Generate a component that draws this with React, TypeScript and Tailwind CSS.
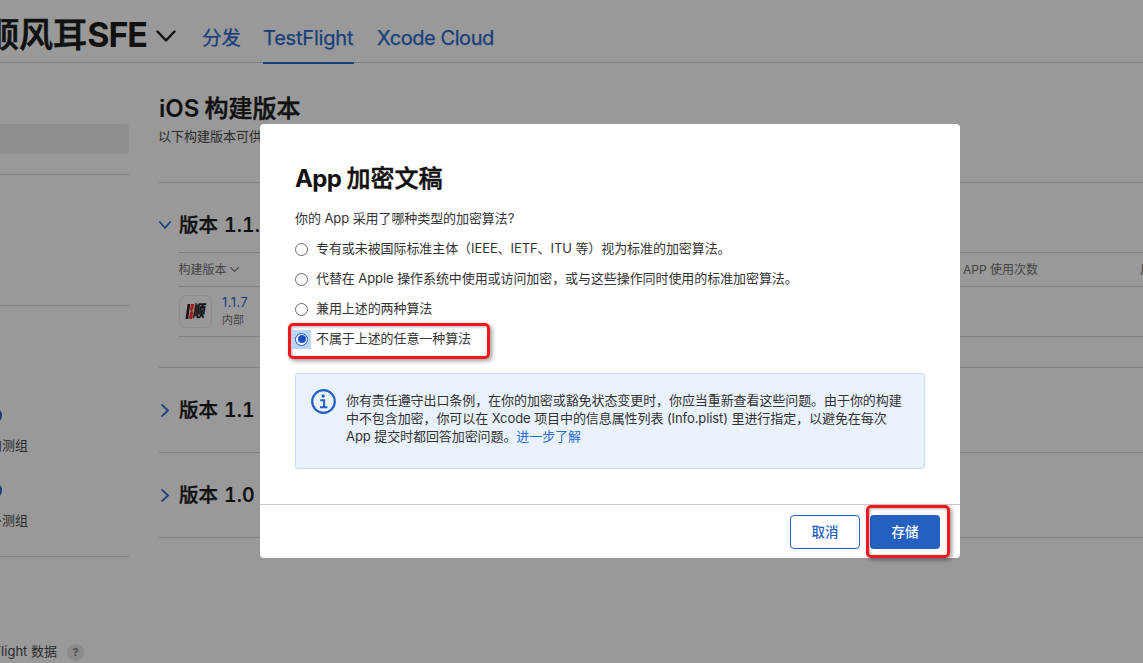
import React from "react";

const font = "font-['Inter','Noto_Sans_CJK_SC',sans-serif]";

function Chevron({ className, down = false, width = 2 }: { className: string; down?: boolean; width?: number }) {
  return (
    <svg
      className={`shrink-0 ${className}`}
      viewBox={down ? "0 0 20 12" : "0 0 12 20"}
      preserveAspectRatio="none"
      fill="none"
      stroke="currentColor"
      strokeWidth={width}
      strokeLinecap="round"
      strokeLinejoin="round"
    >
      <path vectorEffect="non-scaling-stroke" d={down ? "M1.5 1.5 10 10.5 18.5 1.5" : "M1.5 1.5 10.5 10 1.5 18.5"} />
    </svg>
  );
}

function Header() {
  return (
    <header className="flex h-[63px] shrink-0 border-b border-[#7f7f7f]">
      <div className="flex h-[69px] w-[147px] shrink-0 justify-end text-[34px] leading-[69px] whitespace-nowrap text-[#111]">
        <span className="font-medium [-webkit-text-stroke:0.7px_#111]">顺风耳</span>
        <span className="font-bold tracking-[-1px]">SFE</span>
      </div>
      <Chevron down width={2.4} className="mt-[30px] ml-[9px] h-[12px] w-[20px] text-[#111]" />
      <nav className="ml-[26px] flex h-[64px] text-[20px] leading-[76px] whitespace-nowrap text-[#163f7c] [-webkit-text-stroke:0.25px_#163f7c]">
        <a className="w-[61px] text-[19.5px] tracking-[-0.3px]">分发</a>
        <a className="h-[64px] w-[91px] border-b-2 border-[#163f7c] tracking-[-0.2px]">TestFlight</a>
        <a className="ml-[23px] tracking-[-0.42px]">Xcode Cloud</a>
      </nav>
    </header>
  );
}

function Group({ name }: { name: string }) {
  return (
    <div className="h-[75px]">
      <div className="-ml-[15.5px] h-[17px] w-[17px] rounded-full bg-[#163f7c]" />
      <div className="mt-[11px] -ml-[11px] h-[20px] text-[13px] leading-[20px] whitespace-nowrap">{name}</div>
    </div>
  );
}

function Sidebar() {
  return (
    <aside className="w-[129px] shrink-0 overflow-hidden pt-[61px] text-[#2b2b2b]">
      <div className="h-[30px] rounded-r-[4px] bg-[#8f8f8f]" />
      <div className="mt-[20px] h-[132px] border-y border-[#7f7f7f]" />
      <div className="h-[251px] border-b border-[#7f7f7f] pt-[101px]">
        <Group name="内测组" />
        <Group name="外测组" />
      </div>
      <div className="mt-[85px] flex h-[20px] items-center">
        <div className="flex w-[57px] justify-end text-[13px] whitespace-nowrap">TestFlight 数据</div>
        <div className="ml-[10px] flex h-[17px] w-[17px] items-center justify-center rounded-full bg-[#8b8b8b] text-[11px] font-bold text-[#4c4c4c]">
          ?
        </div>
      </div>
    </aside>
  );
}

function Version({ number, open = false, children }: { number: string; open?: boolean; children?: React.ReactNode }) {
  return (
    <section className="border-b border-[#7f7f7f]">
      <div className={open ? "flex h-[69px] items-center pt-[15px]" : "flex h-[84px] items-center"}>
        <div className="flex w-[20px] shrink-0">
          {open ? (
            <Chevron down width={1.7} className="h-[8px] w-[12px] text-[#163f7c]" />
          ) : (
            <Chevron width={1.7} className="ml-[2px] h-[13px] w-[8px] text-[#163f7c]" />
          )}
        </div>
        <h2 className="pt-[2px] text-[19.5px] whitespace-nowrap text-[#111]">
          <span className="font-medium [-webkit-text-stroke:0.4px_#111]">版本</span>
          <span className="ml-[6px] font-semibold tracking-[0.1px] tabular-nums">{number}</span>
        </h2>
      </div>
      {children}
    </section>
  );
}

function AppIcon() {
  return (
    <svg className="h-[33px] w-[33px] shrink-0" viewBox="0 0 33 33">
      <rect x="0.5" y="0.5" width="32" height="32" rx="7" fill="#999" stroke="#8d8d8d" />
      <path d="M8.6 9h2.7L9.2 24H6.5z" fill="#161616" />
      <path d="M12 9h3l-.7 5-1.2 1.6 1 1.4-1 7h-3l.8-6 1.3-1.8-1-1.2z" fill="#a3161c" />
      <text
        transform="translate(13.6 22.4) skewX(-9) scale(.8 1.12)"
        fontSize="15"
        fontWeight="900"
        fill="#111"
      >
        顺
      </text>
    </svg>
  );
}

function Builds() {
  return (
    <main className="ml-[30px] flex-1 overflow-hidden pt-[30px]">
      <h1 className="h-[32px] text-[24px] leading-[32px] whitespace-nowrap text-[#111]">
        <span className="font-semibold">iOS </span>
        <span className="-ml-px font-medium [-webkit-text-stroke:0.5px_#111]">构建版本</span>
      </h1>
      <p className="mt-px -ml-px h-[20px] text-[13px] leading-[20px] whitespace-nowrap text-[#2b2b2b]">以下构建版本可供测试。</p>
      <div className="mt-[36px] border-t border-[#7f7f7f]">
        <Version number="1.1.7" open>
          <div className="mb-[30px] ml-[20px] border-y border-[#7f7f7f]">
            <div className="flex h-[34px] items-center border-b border-[#7f7f7f] text-[12px] whitespace-nowrap text-[#444]">
              <span className="-ml-[0.5px] shrink-0">构建版本</span>
              <Chevron down width={1.2} className="ml-[3px] h-[5px] w-[9px]" />
              <span className="ml-[724.5px] w-[177px] shrink-0">APP 使用次数</span>
              <span className="shrink-0">反馈</span>
            </div>
            <div className="flex h-[49px] items-center">
              <AppIcon />
              <div className="ml-[10px] text-[12px] leading-[18px]">
                <div className="-mt-px text-[13px] tracking-[0.4px] text-[#163f7c]">1.1.7</div>
                <div className="text-[11px] leading-[18px] text-[#444]">内部</div>
              </div>
            </div>
          </div>
        </Version>
        <Version number="1.1" />
        <Version number="1.0" />
      </div>
    </main>
  );
}

const options = [
  "专有或未被国际标准主体（IEEE、IETF、ITU 等）视为标准的加密算法。",
  "代替在 Apple 操作系统中使用或访问加密，或与这些操作同时使用的标准加密算法。",
  "兼用上述的两种算法",
  "不属于上述的任意一种算法",
];

function Option({ label, checked }: { label: string; checked: boolean }) {
  return (
    <label className="relative flex h-[30px] items-center">
      {checked && (
        <span className="absolute -top-px -left-[7px] h-[36px] w-[202px] rounded-[5px] border-[3px] border-[#f5151d] shadow-[2px_2px_4px_rgba(0,0,0,0.4),inset_1px_1px_3px_rgba(0,0,0,0.3)]" />
      )}
      <span
        className={
          checked
            ? "relative -ml-[3px] flex h-[19px] w-[19px] items-center justify-center bg-[#b9d6fb]"
            : "flex h-[19px] w-[13px] items-center justify-center"
        }
      >
        <span
          className={
            checked
              ? "flex h-[13px] w-[13px] shrink-0 items-center justify-center rounded-full border border-[#1f4fc4] bg-white"
              : "h-[13px] w-[13px] shrink-0 rounded-full border border-[#6b6b6b] bg-white"
          }
        >
          {checked && <span className="h-[8px] w-[8px] shrink-0 rounded-full bg-[#1f4fc4]" />}
        </span>
      </span>
      <span className={checked ? "relative ml-[5px]" : "ml-[8px]"}>{label}</span>
    </label>
  );
}

function InfoIcon() {
  return (
    <svg className="h-[25px] w-[25px] shrink-0" viewBox="0 0 25 25" fill="none" stroke="#2360c0" strokeWidth="2">
      <circle cx="12.5" cy="12.5" r="11.3" strokeWidth="2.2" />
      <circle cx="12.2" cy="7" r="1.7" fill="#2360c0" stroke="none" />
      <path d="M9.2 11.2h3.9v6.6M9 18.2h7.4" />
    </svg>
  );
}

function Dialog() {
  return (
    <div className="absolute top-[124px] left-[260px] flex h-[434px] w-[700px] flex-col rounded-[4px] bg-white text-[13px] tracking-[-0.08px] whitespace-nowrap text-[#333]">
      <div className="h-[380px] px-[35px] pt-[39px]">
        <h2 className="h-[32px] text-[24px] leading-[32px] text-[#111]">
          <span className="font-bold tracking-[-0.6px]">App </span>
          <span className="font-medium tracking-normal [-webkit-text-stroke:0.5px_#111]">加密文稿</span>
        </h2>
        <p className="mt-[13px] h-[20px] leading-[20px]">你的 App 采用了哪种类型的加密算法?</p>
        <div className="mt-[6px]">
          {options.map((label, i) => (
            <Option key={label} label={label} checked={i === 3} />
          ))}
        </div>
        <div className="mt-[19px] flex h-[96px] rounded-[3px] border border-[#c3dcf3] bg-[#e9f1fb] pt-[15px] pl-[15px]">
          <InfoIcon />
          <p className="mt-[2px] ml-[10px] leading-[18px]">
            你有责任遵守出口条例，在你的加密或豁免状态变更时，你应当重新查看这些问题。由于你的构建
            <br />
            中不包含加密，你可以在 Xcode 项目中的信息属性列表 (Info.plist) 里进行指定，以避免在每次
            <br />
            App 提交时都回答加密问题。<a className="text-[#2a6bd0]">进一步了解</a>
          </p>
        </div>
      </div>
      <div className="flex flex-1 items-start justify-end border-t border-[#ccc] pt-[10px] pr-[20px] text-[13.5px] font-medium">
        <button className="h-[34px] w-[70px] rounded-[4px] border border-[#2360c0] text-[#2360c0]">取消</button>
        <div className="relative ml-[10px]">
          <button className="h-[34px] w-[70px] rounded-[4px] bg-[#2360c0] text-white">存储</button>
          <span className="absolute -top-[10px] -left-[4px] h-[53px] w-[84px] rounded-[5px] border-[3px] border-[#f5151d] shadow-[2px_2px_4px_rgba(0,0,0,0.4),inset_1px_1px_3px_rgba(0,0,0,0.3)]" />
        </div>
      </div>
    </div>
  );
}

export default function App() {
  return (
    <div lang="zh-CN" className={`relative flex h-[663px] w-[1143px] flex-col overflow-hidden bg-[#999] ${font}`}>
      <Header />
      <div className="flex flex-1">
        <Sidebar />
        <Builds />
      </div>
      <Dialog />
    </div>
  );
}
